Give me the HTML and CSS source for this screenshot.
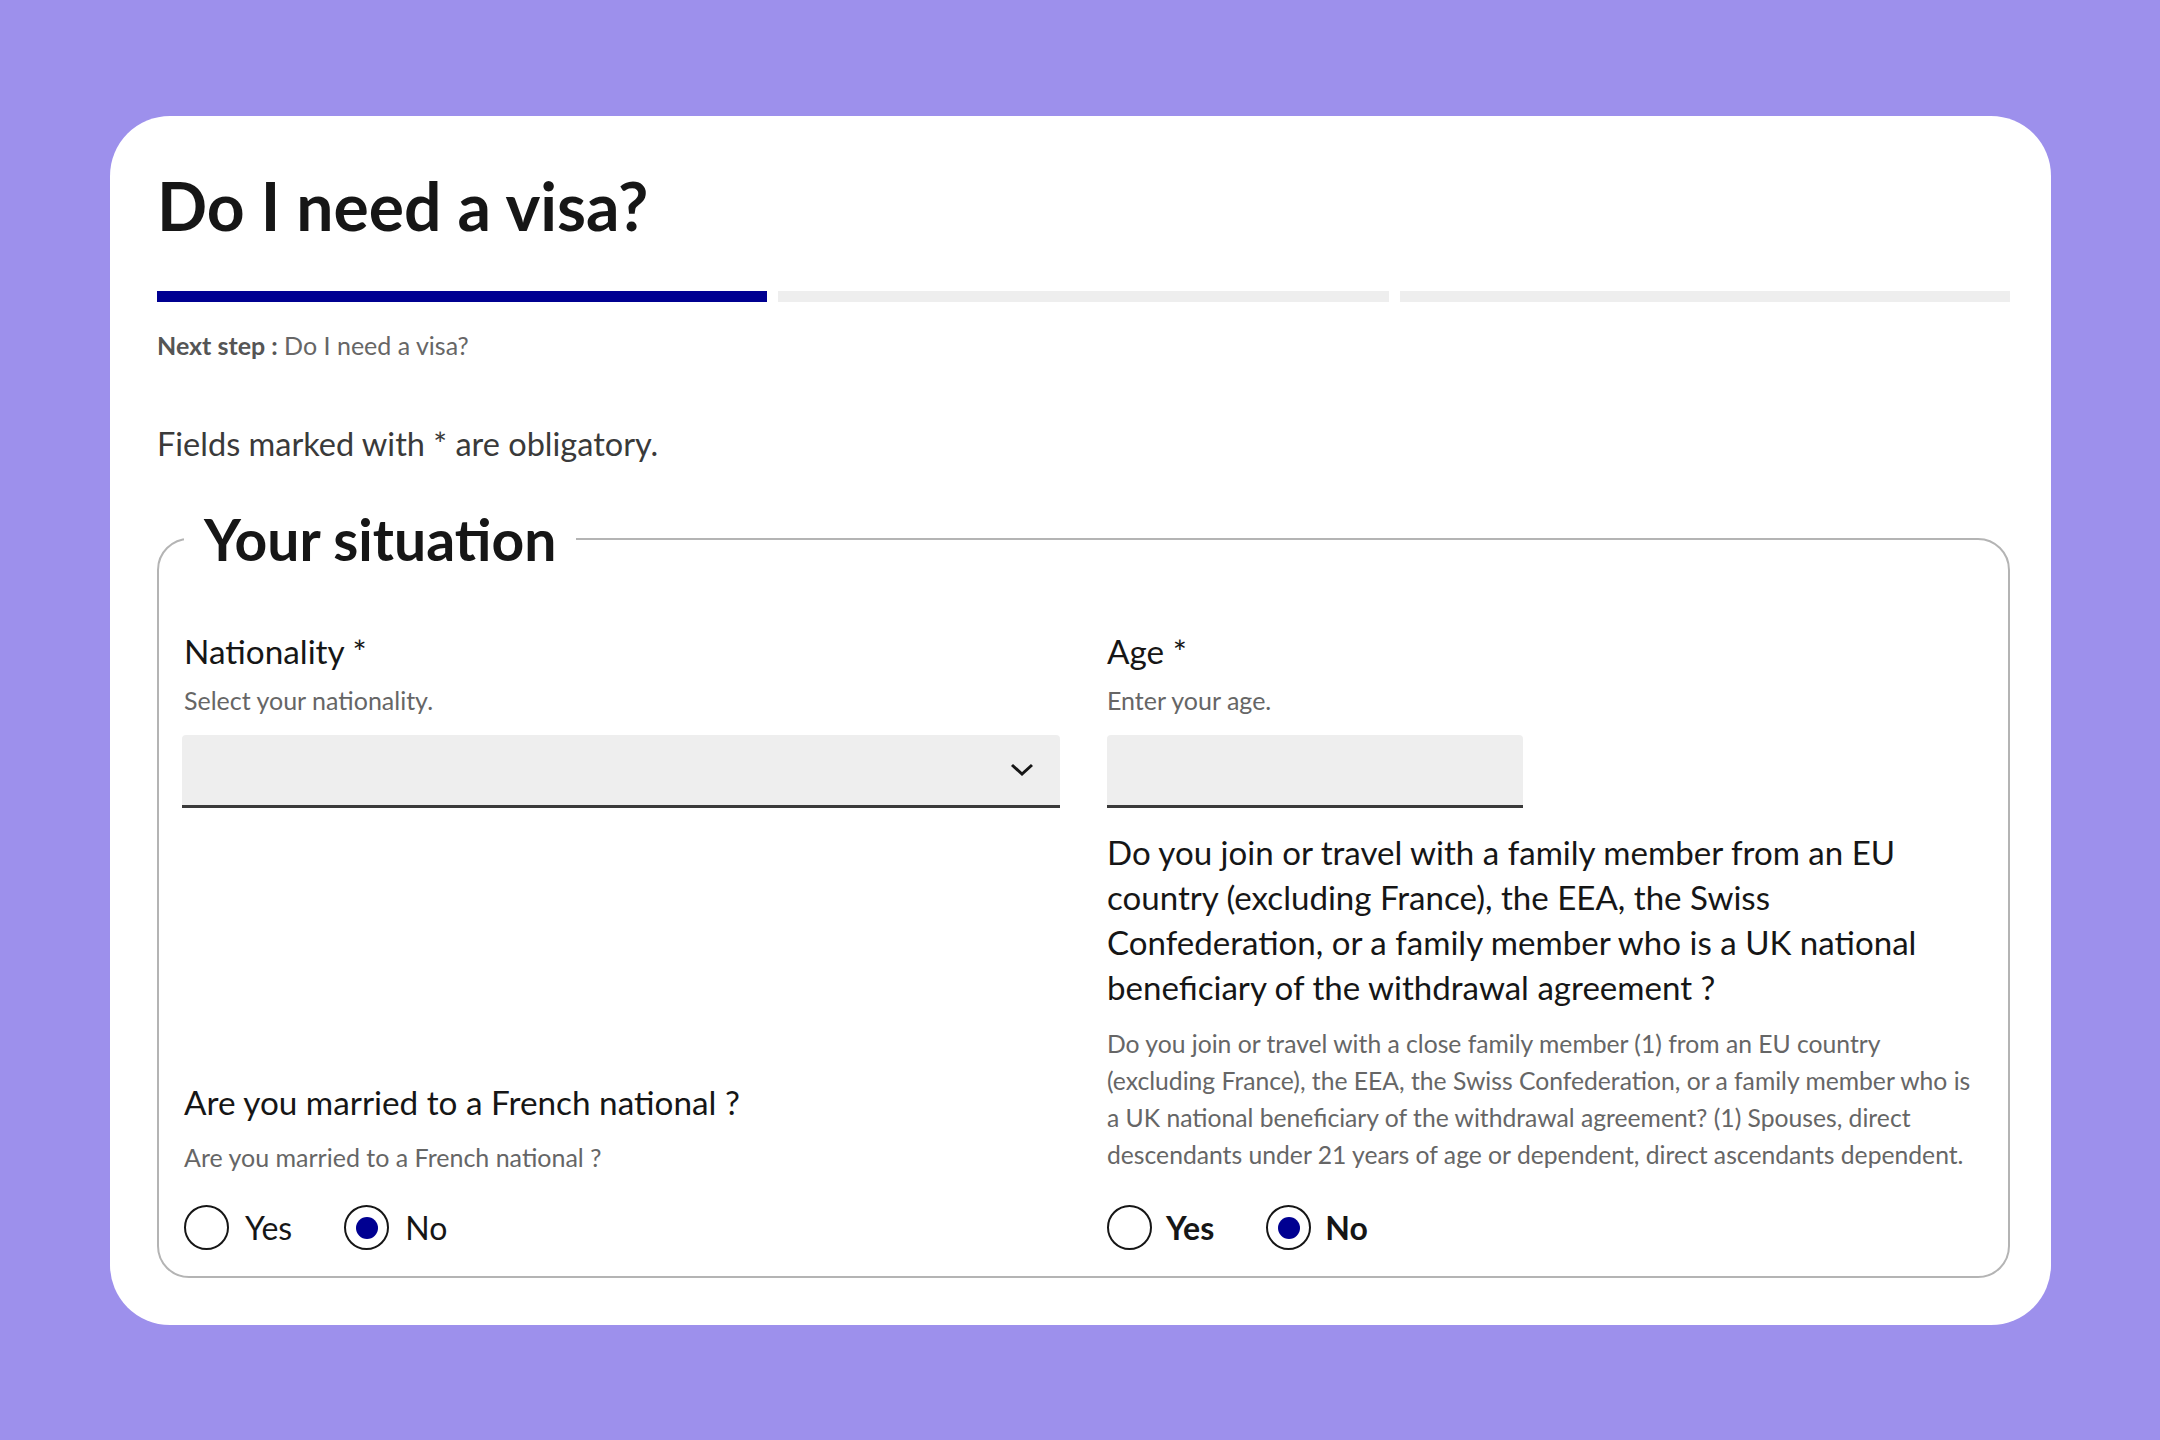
FILE: index.html
```html
<!DOCTYPE html>
<html lang="en">
<head>
<meta charset="utf-8">
<title>Do I need a visa?</title>
<link rel="stylesheet" href="styles.css">
</head>
<body>
<main class="card">
  <h1 class="title">Do I need a visa?</h1>
  <div class="stepper">
    <div class="step step-active"></div>
    <div class="step"></div>
    <div class="step"></div>
  </div>
  <p class="next-step"><strong>Next step :</strong> Do I need a visa?</p>
  <p class="mandatory">Fields marked with * are obligatory.</p>
  <fieldset class="situation">
    <legend class="legend">Your situation</legend>
    <div class="grid">
      <div class="col col-left">
        <div class="field">
          <label class="label">Nationality *</label>
          <p class="hint">Select your nationality.</p>
          <div class="select">
            <svg class="chevron" width="24" height="14" viewBox="0 0 24 14"><path d="M2 2 L12 11 L22 2" fill="none" stroke="#161616" stroke-width="3"/></svg>
          </div>
        </div>
        <div class="field">
          <p class="label">Are you married to a French national ?</p>
          <p class="hint hint-married">Are you married to a French national ?</p>
          <div class="radios">
            <span class="radio-item"><span class="radio"></span><span class="radio-label">Yes</span></span>
            <span class="radio-item"><span class="radio radio-checked"></span><span class="radio-label">No</span></span>
          </div>
        </div>
      </div>
      <div class="col col-right">
        <div class="field">
          <label class="label">Age *</label>
          <p class="hint">Enter your age.</p>
          <div class="input"></div>
        </div>
        <div class="field">
          <p class="question">Do you join or travel with a family member from an EU country (excluding France), the EEA, the Swiss Confederation, or a family member who is a UK national beneficiary of the withdrawal agreement ?</p>
          <p class="hint-long">Do you join or travel with a close family member (1) from an EU country<br>(excluding France), the EEA, the Swiss Confederation, or a family member who is<br>a UK national beneficiary of the withdrawal agreement? (1) Spouses, direct<br>descendants under 21 years of age or dependent, direct ascendants dependent.</p>
          <div class="radios radios-bold">
            <span class="radio-item"><span class="radio"></span><span class="radio-label">Yes</span></span>
            <span class="radio-item"><span class="radio radio-checked"></span><span class="radio-label">No</span></span>
          </div>
        </div>
      </div>
    </div>
  </fieldset>
</main>
</body>
</html>
```

FILE: styles.css
```css
* { box-sizing: border-box; }
html, body { margin: 0; padding: 0; }
body {
  background: #9d90ec;
  width: 2160px;
  height: 1440px;
  overflow: hidden;
  font-family: Lato, "Noto Sans", sans-serif;
  color: #161616;
}
p { margin: 0; }
.card {
  margin: 116px 0 0 110px;
  width: 1941px;
  height: 1209px;
  background: #ffffff;
  border-radius: 60px;
  padding: 48px 41px 0 47px;
}
.title {
  margin: 0;
  font-size: 66px;
  line-height: 84px;
  font-weight: 700;
  color: #161616;
}
.stepper {
  display: flex;
  gap: 11px;
  margin-top: 43px;
}
.step {
  flex: 1;
  height: 11px;
  background: #eeeeee;
}
.step-active { background: #000091; }
.next-step {
  margin-top: 28px;
  font-size: 25px;
  line-height: 30px;
  color: #666666;
}
.next-step strong { font-weight: 700; color: #555555; }
.mandatory {
  margin-top: 64px;
  font-size: 32.5px;
  line-height: 40px;
  color: #3a3a3a;
}
.situation {
  margin: 43px 0 0 0;
  width: 1853px;
  border: 2px solid #b4b4b4;
  border-radius: 32px;
  padding: 0 25px 26px 25px;
  min-width: 0;
}
.legend {
  padding: 0 20px;
  font-size: 57px;
  line-height: 64px;
  font-weight: 700;
  color: #161616;
}
.grid {
  display: grid;
  grid-template-columns: 876px 876px;
  column-gap: 47px;
  margin-top: 58px;
}
.col {
  display: flex;
  flex-direction: column;
}
.col-left { justify-content: space-between; }
.label {
  display: block;
  margin: 0;
  font-size: 33.3px;
  line-height: 44px;
  color: #161616;
}
.hint {
  margin-top: 11px;
  font-size: 25px;
  line-height: 32px;
  color: #666666;
}
.hint-married { margin-top: 17px; }
.select, .input {
  margin-top: 19px;
  height: 73px;
  background: #eeeeee;
  border-bottom: 3px solid #3a3a3a;
  border-radius: 4px 4px 0 0;
}
.select {
  width: 878px;
  margin-left: -2px;
  display: flex;
  align-items: center;
  justify-content: flex-end;
  padding-right: 26px;
}
.input { width: 416px; }
.chevron { display: block; }
.question {
  margin-top: 22px;
  font-size: 33.1px;
  line-height: 45px;
  color: #161616;
}
.hint-long {
  margin-top: 15px;
  font-size: 24.7px;
  line-height: 37px;
  color: #666666;
  margin-right: -10px;
  white-space: nowrap;
}
.radios {
  margin-top: 32px;
  display: flex;
  gap: 52px;
  height: 45px;
}
.radio-item {
  display: flex;
  align-items: center;
  gap: 16px;
}
.radio {
  width: 45px;
  height: 45px;
  border: 2.5px solid #161616;
  border-radius: 50%;
  display: flex;
  align-items: center;
  justify-content: center;
}
.radio-checked::after {
  content: "";
  width: 22px;
  height: 22px;
  border-radius: 50%;
  background: #000091;
}
.radio-label {
  font-size: 32px;
  line-height: 45px;
  color: #161616;
}
.radios-bold .radio-label { font-weight: 700; }
.radios-bold .radio-item { gap: 14px; }
```
